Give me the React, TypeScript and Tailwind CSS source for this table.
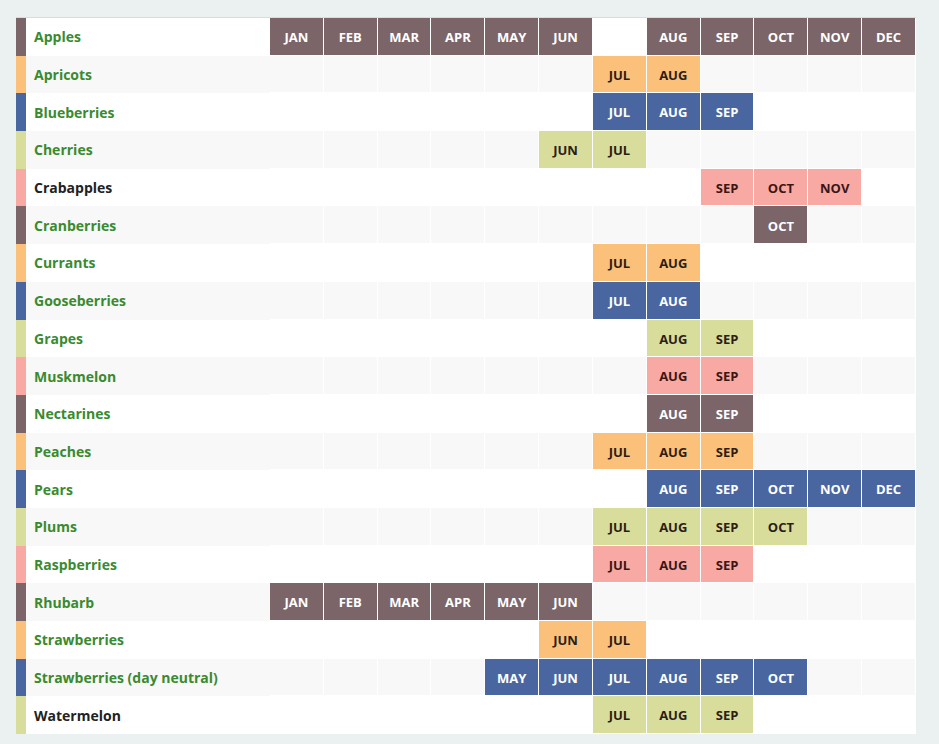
import React from "react";

const MONTHS = ["JAN", "FEB", "MAR", "APR", "MAY", "JUN", "JUL", "AUG", "SEP", "OCT", "NOV", "DEC"];

type Tone = "brown" | "orange" | "blue" | "green" | "pink";

const strip: Record<Tone, string> = {
    brown: "bg-[#7b6569]",
    orange: "bg-[#fbc17b]",
    blue: "bg-[#4a66a0]",
    green: "bg-[#d8dd9b]",
    pink: "bg-[#f8a9a3]",
};

const cell: Record<Tone, string> = {
    brown: "bg-[#7b6569] text-white",
    orange: "bg-[#fbc17b] text-[#2d1c14]",
    blue: "bg-[#4a66a0] text-white",
    green: "bg-[#d8dd9b] text-[#2d1c14]",
    pink: "bg-[#f8a9a3] text-[#3a1616]",
};

const fruits: { name: string; tone: Tone; months: number[]; dark?: boolean }[] = [
    { name: "Apples", tone: "brown", months: [0, 1, 2, 3, 4, 5, 7, 8, 9, 10, 11] },
    { name: "Apricots", tone: "orange", months: [6, 7] },
    { name: "Blueberries", tone: "blue", months: [6, 7, 8] },
    { name: "Cherries", tone: "green", months: [5, 6] },
    { name: "Crabapples", tone: "pink", months: [8, 9, 10], dark: true },
    { name: "Cranberries", tone: "brown", months: [9] },
    { name: "Currants", tone: "orange", months: [6, 7] },
    { name: "Gooseberries", tone: "blue", months: [6, 7] },
    { name: "Grapes", tone: "green", months: [7, 8] },
    { name: "Muskmelon", tone: "pink", months: [7, 8] },
    { name: "Nectarines", tone: "brown", months: [7, 8] },
    { name: "Peaches", tone: "orange", months: [6, 7, 8] },
    { name: "Pears", tone: "blue", months: [7, 8, 9, 10, 11] },
    { name: "Plums", tone: "green", months: [6, 7, 8, 9] },
    { name: "Raspberries", tone: "pink", months: [6, 7, 8] },
    { name: "Rhubarb", tone: "brown", months: [0, 1, 2, 3, 4, 5] },
    { name: "Strawberries", tone: "orange", months: [5, 6] },
    { name: "Strawberries (day neutral)", tone: "blue", months: [4, 5, 6, 7, 8, 9] },
    { name: "Watermelon", tone: "green", months: [6, 7, 8], dark: true },
];

export default function App() {
    return (
        <main className="min-h-[744px] bg-[#ebf0f0] pl-4 pt-[17px] pb-2 font-['Open_Sans',sans-serif]">
            <div className="w-[900px] border-t border-[#d9dcdc]">
                {fruits.map((f, i) => (
                    <div
                        key={f.name}
                        className={`grid h-[37.7px] grid-cols-[10px_244px_repeat(12,minmax(0,1fr))] ${
                            i % 2 === 0 ? "bg-white" : "bg-[#f8f8f8]"
                        }`}
                    >
                        <div className={strip[f.tone]} />
                        <div
                            className={`flex items-center pl-2 text-[14px] font-bold ${
                                f.dark ? "text-[#222]" : "text-[#3a8a2f]"
                            }`}
                        >
                            {f.name}
                        </div>
                        {MONTHS.map((m, j) => {
                            const on = f.months.includes(j);
                            return (
                                <div
                                    key={m}
                                    className={`flex items-center justify-center border-r border-b border-white pt-[3px] text-[13px] font-bold ${
                                        on ? cell[f.tone] : ""
                                    }`}
                                >
                                    {on ? m : ""}
                                </div>
                            );
                        })}
                    </div>
                ))}
            </div>
        </main>
    );
}
